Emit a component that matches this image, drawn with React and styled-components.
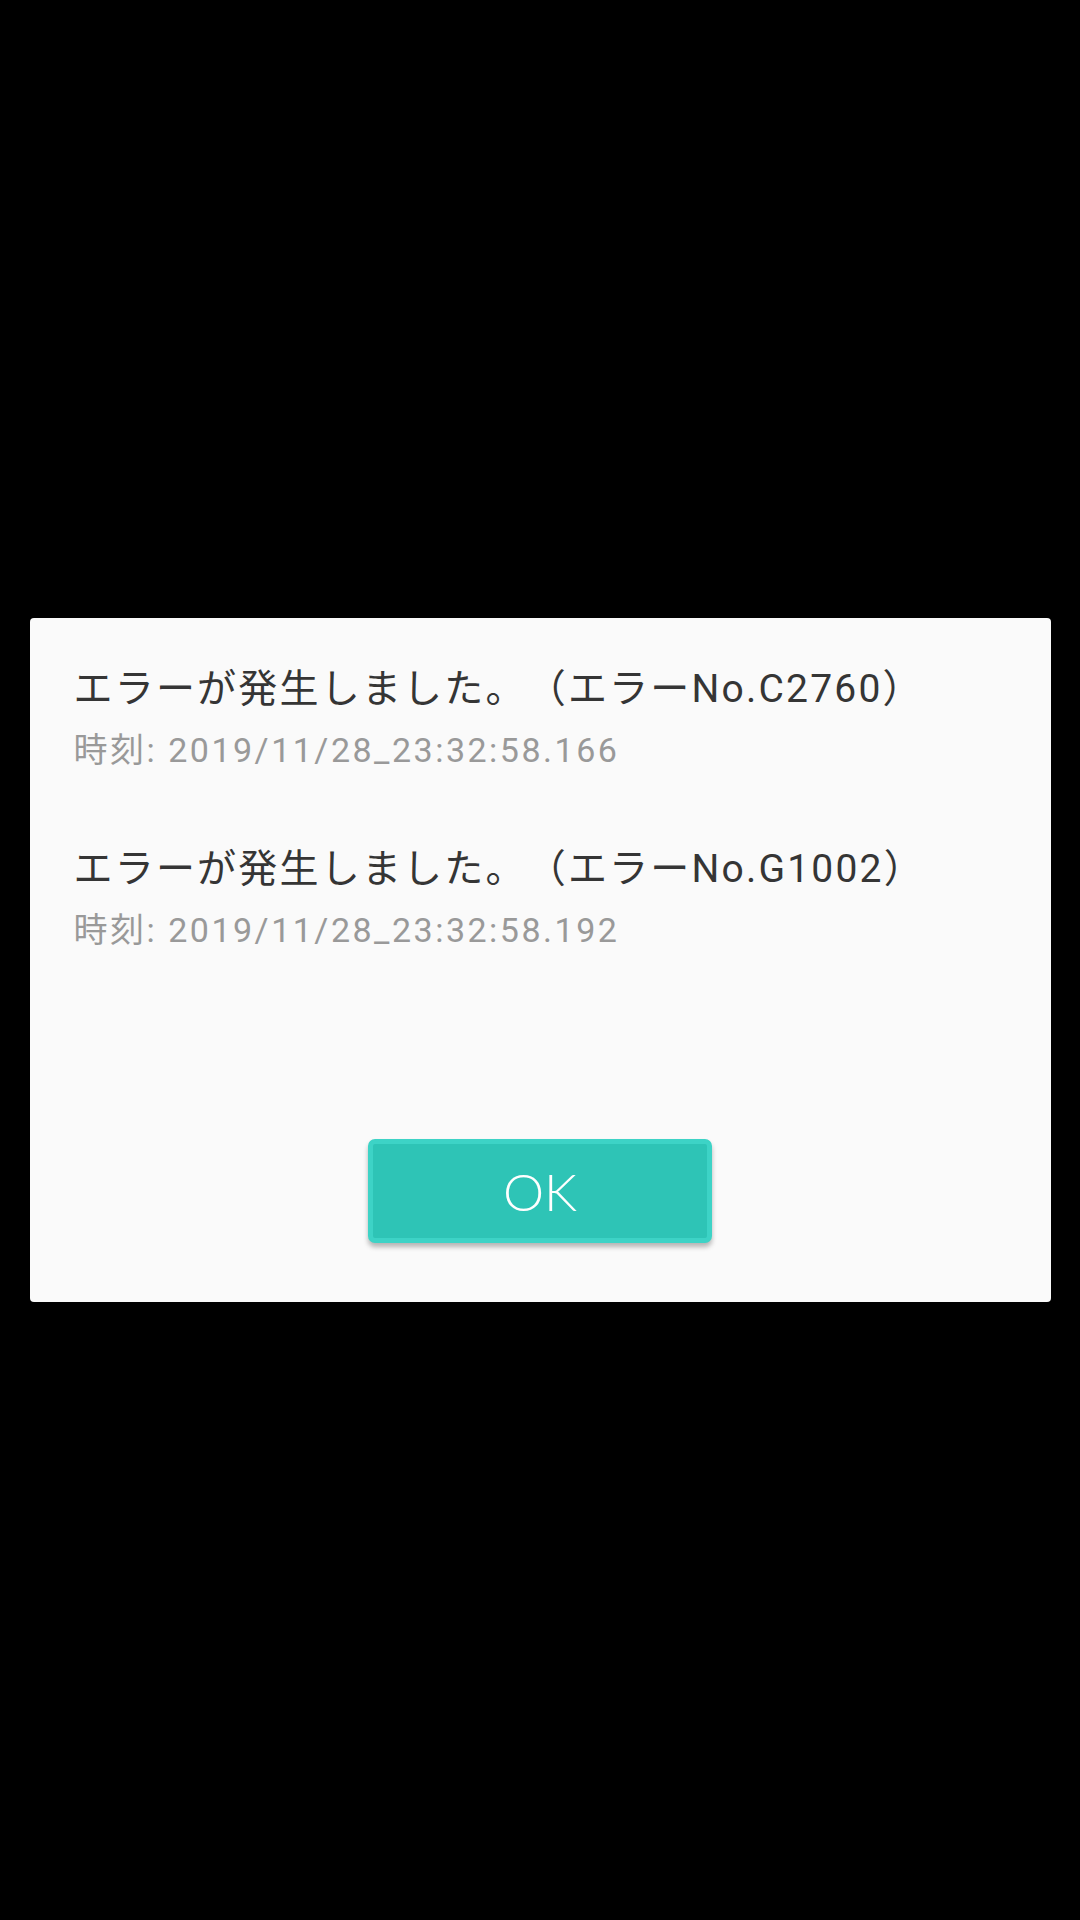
import React from 'react';
import styled, { createGlobalStyle } from 'styled-components';

const Global = createGlobalStyle`
    html, body {
        margin: 0;
        padding: 0;
        background: #000000;
    }
    body {
        font-family: Roboto, "Noto Sans CJK JP", sans-serif;
    }
`;

const Screen = styled.div`
    width: 1080px;
    height: 1920px;
    background: #000000;
    display: flex;
    align-items: center;
    justify-content: center;
`;

const Dialog = styled.div`
    width: 1021px;
    height: 684px;
    box-sizing: border-box;
    background: #fafafa;
    border-radius: 4px;
    padding: 42px 44px 59px 44px;
    display: flex;
    flex-direction: column;
`;

const List = styled.div`
    flex: 1;
    display: flex;
    flex-direction: column;
    gap: 65px;
`;

const Item = styled.div`
    display: flex;
    flex-direction: column;
    gap: 7px;
`;

const Message = styled.div`
    font-family: Roboto, "Noto Sans CJK JP", sans-serif;
    font-size: 39px;
    line-height: 58px;
    letter-spacing: 2.2px;
    color: #353535;
    white-space: nowrap;
    text-spacing-trim: space-all;
`;

const Time = styled.div`
    font-family: Roboto, "Noto Sans CJK JP", sans-serif;
    font-size: 34px;
    line-height: 50px;
    letter-spacing: 2.5px;
    color: #999999;
    white-space: nowrap;
    text-spacing-trim: space-all;
`;

const Footer = styled.div`
    display: flex;
    justify-content: center;
`;

const OkButton = styled.button`
    width: 344px;
    height: 104px;
    box-sizing: border-box;
    background: #2ec4b6;
    border: 5px solid #3dd3c6;
    border-radius: 7px;
    box-shadow: 0 4px 5px rgba(0, 0, 0, 0.28);
    color: #ffffff;
    font-family: Lato, "Noto Sans", sans-serif;
    font-weight: 300;
    font-size: 52px;
    padding: 0;
`;

const errors = [
    { code: 'C2760', time: '2019/11/28_23:32:58.166' },
    { code: 'G1002', time: '2019/11/28_23:32:58.192' },
];

export default function App() {
    return (
        <Screen>
            <Global />
            <Dialog>
                <List>
                    {errors.map((e) => (
                        <Item key={e.code}>
                            <Message>エラーが発生しました。（エラーNo.{e.code}）</Message>
                            <Time>時刻: {e.time}</Time>
                        </Item>
                    ))}
                </List>
                <Footer>
                    <OkButton>OK</OkButton>
                </Footer>
            </Dialog>
        </Screen>
    );
}
